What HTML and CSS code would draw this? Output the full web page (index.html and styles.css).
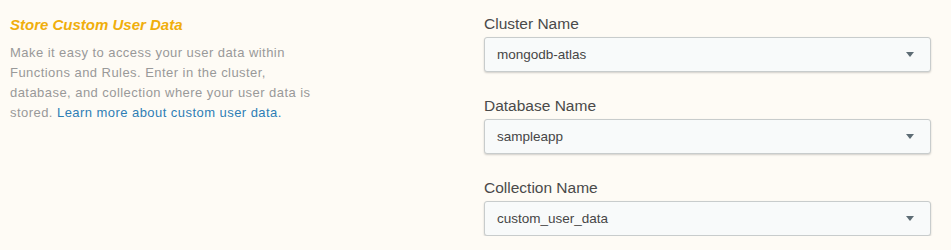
FILE: index.html
```html
<!DOCTYPE html>
<html lang="en">
<head>
  <meta charset="UTF-8">
  <title>Store Custom User Data</title>
  <link rel="stylesheet" href="styles.css">
</head>
<body>
  <main class="section">
    <div class="intro">
      <h3 class="intro-title">Store Custom User Data</h3>
      <p class="intro-text">
        Make it easy to access your user data within Functions and Rules. Enter in the cluster,
        database, and collection where your user data is stored.
        <a href="#" class="intro-link">Learn more about custom user data.</a>
      </p>
    </div>

    <div class="fields">
      <div class="field">
        <label class="field-label">Cluster Name</label>
        <div class="select">
          <span class="select-value">mongodb-atlas</span>
          <span class="select-caret"></span>
        </div>
      </div>
      <div class="field">
        <label class="field-label">Database Name</label>
        <div class="select">
          <span class="select-value">sampleapp</span>
          <span class="select-caret"></span>
        </div>
      </div>
      <div class="field">
        <label class="field-label">Collection Name</label>
        <div class="select">
          <span class="select-value">custom_user_data</span>
          <span class="select-caret"></span>
        </div>
      </div>
    </div>
  </main>
</body>
</html>
```

FILE: styles.css
```css
body {
  margin: 0;
  background-color: #fefbf5;
  font-family: 'Liberation Sans', Arial, sans-serif;
}
.section {
  display: flex;
  padding: 14px 20px 0 10px;
}
.intro {
  width: 305px;
  flex-shrink: 0;
}
.intro-title {
  margin: 0;
  padding-top: 1px;
  font-size: 15px;
  font-style: italic;
  font-weight: bold;
  color: #f0ae0c;
  line-height: 20px;
}
.intro-text {
  margin: 8px 0 0;
  font-size: 13px;
  letter-spacing: 0.45px;
  line-height: 20px;
  color: #999;
}
.intro-link {
  color: #2e7eb5;
  text-decoration: none;
}
.fields {
  margin-left: 169px;
  flex: 1;
  display: flex;
  flex-direction: column;
  gap: 24px;
}
.field {
  display: flex;
  flex-direction: column;
}
.field-label {
  font-size: 15.5px;
  color: #4a4a4a;
  line-height: 20px;
  margin-bottom: 3px;
}
.select {
  display: flex;
  align-items: center;
  justify-content: space-between;
  height: 33px;
  padding: 0 16px 0 12px;
  background-color: #f8fafa;
  border: 1px solid #c8cccc;
  border-radius: 3px;
  box-shadow: 0 1px 2px rgba(0, 0, 0, 0.18);
}
.select-value {
  font-size: 13.5px;
  color: #464646;
}
.select-caret {
  width: 0;
  height: 0;
  border-left: 4px solid transparent;
  border-right: 4px solid transparent;
  border-top: 5px solid #5d6c74;
}
```
